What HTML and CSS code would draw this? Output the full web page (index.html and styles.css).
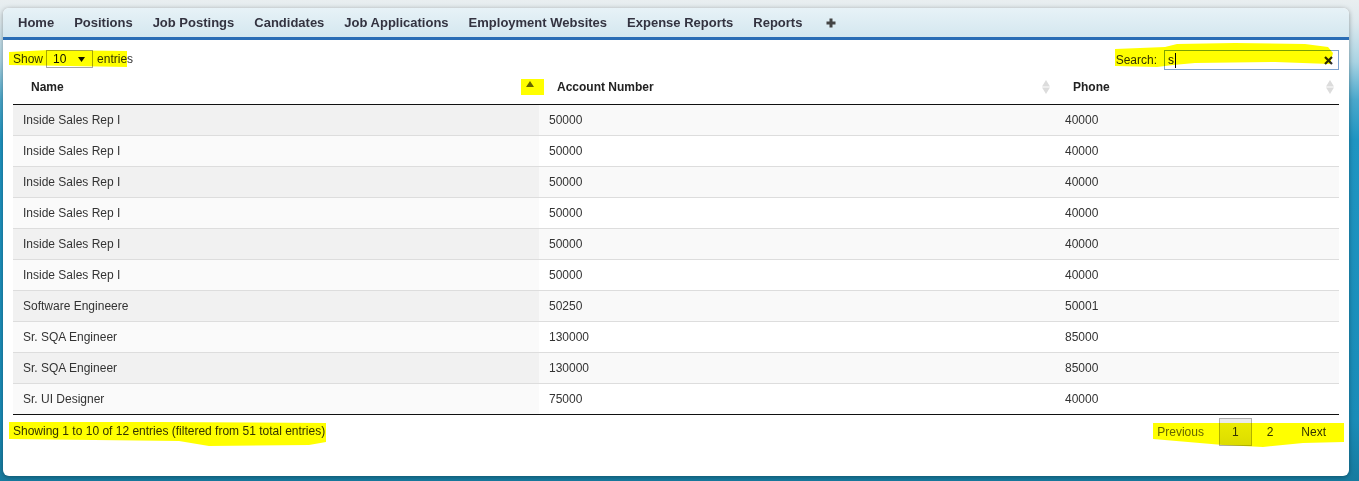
FILE: index.html
```html
<!DOCTYPE html>
<html lang="en">
<head>
<meta charset="utf-8">
<title>Positions</title>
<link rel="stylesheet" href="styles.css">
</head>
<body>
<div class="card">
  <nav class="nav">
    <a class="nav-item">Home</a>
    <a class="nav-item">Positions</a>
    <a class="nav-item">Job Postings</a>
    <a class="nav-item">Candidates</a>
    <a class="nav-item">Job Applications</a>
    <a class="nav-item">Employment Websites</a>
    <a class="nav-item">Expense Reports</a>
    <a class="nav-item">Reports</a>
    <a class="nav-item nav-plus"><svg width="10" height="10" viewBox="0 0 10 10"><path d="M5 0.5v9M0.5 5h9" stroke="#444" stroke-width="3"/></svg></a>
  </nav>
  <div class="content">
    <div class="controls">
      <div class="length">
        <span>Show</span>
        <span class="select"><span>10</span><svg class="select-arrow" width="7" height="5" viewBox="0 0 7 5"><path d="M0 0h7L3.5 5z" fill="#111"/></svg></span>
        <span>entries</span>
      </div>
      <div class="search">
        <span>Search:</span>
        <span class="input"><span>s</span><span class="caret"></span><svg class="clear" width="9" height="9" viewBox="0 0 9 9"><path d="M1 1l7 7M8 1l-7 7" stroke="#2a2a2a" stroke-width="2.2"/></svg></span>
      </div>
    </div>
    <table class="grid">
      <colgroup><col class="c-name"><col class="c-acct"><col class="c-phone"></colgroup>
      <thead>
        <tr>
          <th>Name<svg class="sort sort-asc" width="8" height="6" viewBox="0 0 8 6"><path d="M0 6L4 0l4 6z" fill="#666"/></svg></th>
          <th>Account Number<svg class="sort sort-both" width="8" height="14" viewBox="0 0 8 14"><path d="M0 6.5L4 0l4 6.5z M0 7.5h8L4 14z" fill="#dcdcdc"/></svg></th>
          <th>Phone<svg class="sort sort-both" width="8" height="14" viewBox="0 0 8 14"><path d="M0 6.5L4 0l4 6.5z M0 7.5h8L4 14z" fill="#dcdcdc"/></svg></th>
        </tr>
      </thead>
      <tbody>
        <tr><td>Inside Sales Rep I</td><td>50000</td><td>40000</td></tr>
        <tr><td>Inside Sales Rep I</td><td>50000</td><td>40000</td></tr>
        <tr><td>Inside Sales Rep I</td><td>50000</td><td>40000</td></tr>
        <tr><td>Inside Sales Rep I</td><td>50000</td><td>40000</td></tr>
        <tr><td>Inside Sales Rep I</td><td>50000</td><td>40000</td></tr>
        <tr><td>Inside Sales Rep I</td><td>50000</td><td>40000</td></tr>
        <tr><td>Software Engineere</td><td>50250</td><td>50001</td></tr>
        <tr><td>Sr. SQA Engineer</td><td>130000</td><td>85000</td></tr>
        <tr><td>Sr. SQA Engineer</td><td>130000</td><td>85000</td></tr>
        <tr><td>Sr. UI Designer</td><td>75000</td><td>40000</td></tr>
      </tbody>
    </table>
    <div class="footer">
      <div class="info">Showing 1 to 10 of 12 entries (filtered from 51 total entries)</div>
      <div class="paginate">
        <a class="pbtn disabled">Previous</a>
        <a class="pbtn current">1</a>
        <a class="pbtn">2</a>
        <a class="pbtn">Next</a>
      </div>
    </div>
  </div>
  <div class="hl hl-length"></div>
  <div class="hl hl-sort"></div>
  <div class="hl hl-search"></div>
  <div class="hl hl-info"></div>
  <div class="hl hl-pages"></div>
</div>
</body>
</html>
```
FILE: styles.css
```css
html, body {
  margin: 0;
  padding: 0;
}
body {
  height: 481px;
  overflow: hidden;
  font-family: "Liberation Sans", Arial, sans-serif;
  background: linear-gradient(to bottom, #e9eef0 0px, #dde9ee 22px, #a9d3e3 62px, #4aa8cc 100px, #1f95c2 140px, #1a8cb8 420px, #177b9f 481px);
}
.card {
  position: relative;
  width: 1346px;
  height: 468px;
  margin: 8px 0 0 3px;
  background: #fff;
  border-radius: 6px;
  box-shadow: 0 1px 5px rgba(0, 0, 0, 0.35);
}
.nav {
  display: flex;
  align-items: center;
  height: 29px;
  padding-left: 5px;
  border-bottom: 3px solid #2a6db5;
  border-radius: 6px 6px 0 0;
  background: linear-gradient(to bottom, #e7f2f7, #d4e7ef);
}
.nav-item {
  padding: 0 10px;
  font-size: 13px;
  font-weight: bold;
  color: #333340;
  line-height: 16px;
}
.nav-plus {
  display: flex;
  padding-left: 14px;
}
.content {
  padding: 10px 10px 0;
}
.controls {
  display: flex;
  justify-content: space-between;
  align-items: flex-start;
  height: 20px;
  font-size: 12px;
  color: #333;
}
.length {
  display: flex;
  align-items: center;
  height: 18px;
}
.select {
  display: flex;
  align-items: center;
  width: 47px;
  height: 18px;
  box-sizing: border-box;
  margin: 0 4px 0 3px;
  padding-left: 6px;
  border: 1px solid #a6a6a6;
  background: #fff;
  color: #111;
}
.select-arrow {
  margin-left: auto;
  margin-right: 7px;
}
.search {
  display: flex;
  align-items: center;
  height: 20px;
}
.input {
  position: relative;
  display: flex;
  align-items: center;
  width: 175px;
  height: 20px;
  box-sizing: border-box;
  margin-left: 7px;
  padding-left: 3px;
  border: 1px solid #7da2ce;
  background: #fff;
  color: #111;
}
.caret {
  width: 1px;
  height: 15px;
  margin-left: 1px;
  background: #000;
}
.clear {
  position: absolute;
  right: 5px;
  top: 5px;
}
.grid {
  width: 1326px;
  table-layout: fixed;
  border-collapse: separate;
  border-spacing: 0;
  font-size: 12px;
  color: #333;
}
.c-name { width: 526px; }
.c-acct { width: 516px; }
.c-phone { width: 284px; }
.grid th {
  position: relative;
  padding: 10px 18px;
  line-height: 14px;
  text-align: left;
  font-weight: bold;
  color: #222;
  border-bottom: 1px solid #111;
}
.sort {
  position: absolute;
  right: 5px;
}
.sort-asc { top: 11px; }
.sort-both { top: 10px; }
.grid td {
  padding: 8px 10px;
  line-height: 14px;
  border-top: 1px solid #ddd;
  white-space: nowrap;
}
.grid tbody tr:first-child td { border-top: 0; }
.grid tbody tr:last-child td { border-bottom: 1px solid #111; }
.grid tbody tr:nth-child(odd) td { background: #f9f9f9; }
.grid tbody tr:nth-child(odd) td:first-child { background: #f1f1f1; }
.grid tbody tr:nth-child(even) td { background: #fff; }
.grid tbody tr:nth-child(even) td:first-child { background: #fafafa; }
.footer {
  display: flex;
  justify-content: space-between;
  font-size: 12px;
  color: #333;
}
.info {
  padding-top: 9px;
  line-height: 14px;
}
.paginate {
  display: flex;
  padding-top: 3px;
}
.pbtn {
  padding: 6px 12px;
  margin-left: 2px;
  line-height: 14px;
  border: 1px solid transparent;
  color: #333;
}
.pbtn.disabled { color: #666; }
.pbtn.current {
  border-color: #b0b0b0;
  background: linear-gradient(to bottom, #ececec, #dcdcdc);
}
.hl {
  position: absolute;
  background: #ffff00;
  mix-blend-mode: multiply;
  pointer-events: none;
}
.hl-length {
  left: 6px;
  top: 42px;
  width: 118px;
  height: 17px;
  clip-path: polygon(0 2px, 40px 0, 118px 1px, 118px 17px, 60px 16px, 0 15px);
}
.hl-sort {
  left: 518px;
  top: 71px;
  width: 23px;
  height: 16px;
}
.hl-search {
  left: 1112px;
  top: 35px;
  width: 218px;
  height: 24px;
  clip-path: polygon(0 6px, 50px 4px, 62px 1px, 120px 0, 190px 1px, 213px 4px, 218px 10px, 215px 21px, 160px 19px, 80px 20px, 58px 22px, 42px 24px, 0 23px);
}
.hl-info {
  left: 6px;
  top: 414px;
  width: 317px;
  height: 24px;
  clip-path: polygon(0 0, 150px 0, 317px 1px, 317px 20px, 300px 23px, 200px 24px, 170px 19px, 0 17px);
}
.hl-pages {
  left: 1150px;
  top: 415px;
  width: 191px;
  height: 24px;
  clip-path: polygon(0 0, 191px 0, 191px 19px, 150px 20px, 110px 24px, 70px 22px, 0 16px);
}
```
